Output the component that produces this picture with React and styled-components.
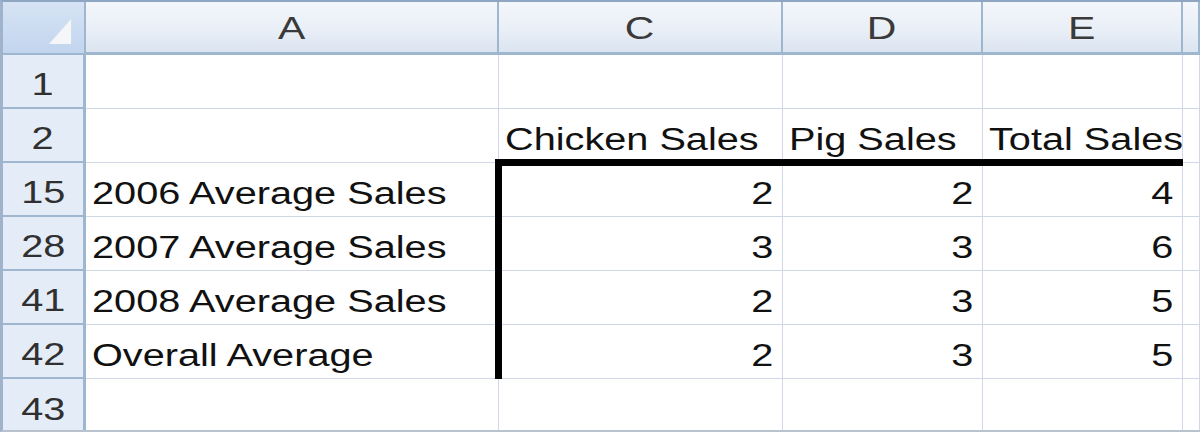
import React from 'react'
import styled, { createGlobalStyle, css } from 'styled-components'

const GlobalStyle = createGlobalStyle`
  html, body {
    margin: 0;
    padding: 0;
    background: #ffffff;
    overflow: hidden;
  }
  body {
    font-family: "Liberation Sans", Arial, sans-serif;
  }
`

const columns = ['A', 'C', 'D', 'E', '']

const rows = [
  { n: '1', cells: ['', '', '', ''] },
  { n: '2', cells: ['', 'Chicken Sales', 'Pig Sales', 'Total Sales'], heading: true },
  { n: '15', cells: ['2006 Average Sales', '2', '2', '4'], boxTop: true, box: true },
  { n: '28', cells: ['2007 Average Sales', '3', '3', '6'], box: true },
  { n: '41', cells: ['2008 Average Sales', '2', '3', '5'], box: true },
  { n: '42', cells: ['Overall Average', '2', '3', '5'], box: true },
  { n: '43', cells: ['', '', '', ''] },
]

function App() {
  return (
    <>
      <GlobalStyle />
      <Sheet>
        <Corner>
          <CornerMark viewBox="0 0 24 27">
            <polygon points="23,0 23,26 0,26" fill="#f4f6f8" />
          </CornerMark>
        </Corner>
        {columns.map((c, i) => (
          <ColHead key={'h' + i}>
            <Glyph $origin="center">{c}</Glyph>
          </ColHead>
        ))}

        {rows.map((r) => (
          <React.Fragment key={r.n}>
            <RowHead>
              <Glyph $origin="center">{r.n}</Glyph>
            </RowHead>
            {r.cells.map((v, i) => {
              const numeric = i > 0 && !r.heading
              return (
                <Cell
                  key={i}
                  $right={numeric}
                  $thickTop={r.boxTop && i > 0}
                  $thickLeft={r.box && i === 1}
                >
                  <Glyph $origin={numeric ? 'right' : 'left'}>{v}</Glyph>
                </Cell>
              )
            })}
            <Cell />
          </React.Fragment>
        ))}
      </Sheet>
    </>
  )
}

export default App

const Sheet = styled.div`
  display: grid;
  grid-template-columns: 83px 413px 284px 200px 200px 1fr;
  grid-template-rows: 53px repeat(6, 54px) 55px;
  width: 1200px;
  height: 432px;
  box-sizing: border-box;
  border-top: 2px solid #8ea6c2;
  border-left: 3px solid #9fb4cc;
  border-bottom: 2px solid #b9c3cf;
  overflow: hidden;
  background: #ffffff;
`

const Corner = styled.div`
  background: linear-gradient(#d6e3f4, #c2d5ee);
  border-right: 2px solid #9eb6ce;
  border-bottom: 2px solid #9eb6ce;
  display: flex;
  align-items: flex-end;
  justify-content: flex-end;
  padding: 0 12px 8px 0;
`

const CornerMark = styled.svg`
  width: 23px;
  height: 26px;
`

const ColHead = styled.div`
  background: linear-gradient(#f3f6fb 0%, #e9eff7 55%, #dbe4f0 100%);
  border-right: 2px solid #9eb6ce;
  border-bottom: 3px solid #9eb6ce;
  display: flex;
  align-items: center;
  justify-content: center;
  color: #3a3a3a;
  font-size: 32px;
  padding-top: 2px;
`

const RowHead = styled.div`
  background: #e4ecf7;
  border-right: 3px solid #9eb6ce;
  border-bottom: 2px solid #9eb6ce;
  display: flex;
  align-items: flex-end;
  justify-content: center;
  color: #303030;
  font-size: 31px;
  padding-bottom: 4px;
  box-sizing: border-box;
`

const Cell = styled.div`
  position: relative;
  box-sizing: border-box;
  border-right: 1px solid #d0d7e5;
  border-bottom: 1px solid #d0d7e5;
  display: flex;
  align-items: flex-end;
  justify-content: ${(p) => (p.$right ? 'flex-end' : 'flex-start')};
  padding: ${(p) => (p.$right ? '0 9px 4px 0' : '0 0 4px 6px')};
  font-size: 31px;
  color: #111;
  white-space: nowrap;
  overflow: visible;

  ${(p) =>
    p.$thickTop &&
    css`
      &::before {
        content: '';
        position: absolute;
        top: -4px;
        left: -4px;
        right: -1px;
        height: 7px;
        background: #000;
        z-index: 2;
      }
    `}

  ${(p) =>
    p.$thickLeft &&
    css`
      &::after {
        content: '';
        position: absolute;
        top: -4px;
        bottom: -1px;
        left: -4px;
        width: 7px;
        background: #000;
        z-index: 2;
      }
    `}
`

const Glyph = styled.span`
  display: inline-block;
  transform: scaleX(1.28);
  transform-origin: ${(p) => p.$origin};
  line-height: 1.15;
`
